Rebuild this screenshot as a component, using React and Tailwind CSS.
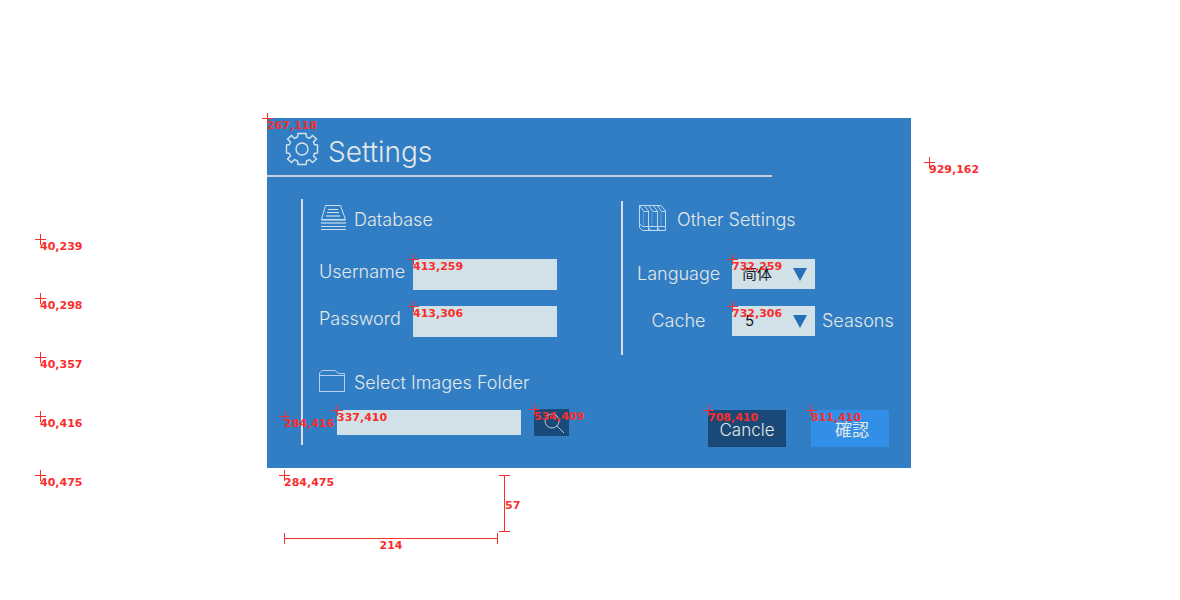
import React from "react";

const marks = [
  [267, 118], [929, 162], [40, 239], [40, 298], [40, 357], [40, 416], [40, 475],
  [284, 416], [284, 475], [413, 259], [413, 306], [732, 259], [732, 306],
  [337, 410], [534, 409], [708, 410], [811, 410],
];

function Mark({ x, y }) {
  return (
    <div className="absolute" style={{ left: x, top: y }}>
      <svg className="absolute -top-[5px] -left-[5px]" width="11" height="11" shapeRendering="crispEdges" aria-hidden="true">
        <path d="M0 5.5H11M5.5 0V11" stroke="#fa2d2d" />
      </svg>
      <span className="block leading-4 whitespace-nowrap">{x},{y}</span>
    </div>
  );
}

function Measurements() {
  return (
    <div className="pointer-events-none absolute top-0 left-0 font-['DejaVu_Sans',sans-serif] text-[11px] font-bold text-[#fa2d2d]">
      {marks.map(([x, y]) => <Mark key={x + "-" + y} x={x} y={y} />)}
      <div className="absolute top-[475px] left-[499px] flex h-[57px] items-center">
        <svg width="11" height="57" shapeRendering="crispEdges" className="shrink-0" aria-hidden="true">
          <path d="M0 .5H11M0 56.5H11M5.5 0V57" stroke="#fa2d2d" fill="none" />
        </svg>
        <span className="-ml-[5px] pt-1 leading-4">57</span>
      </div>
      <div className="absolute top-[533px] left-[284px] w-[214px] text-center">
        <svg width="214" height="11" shapeRendering="crispEdges" className="block" aria-hidden="true">
          <path d="M.5 0V11M213.5 0V11M0 5.5H214" stroke="#fa2d2d" fill="none" />
        </svg>
        <span className="-mt-[6px] block leading-4">214</span>
      </div>
    </div>
  );
}

function GearIcon() {
  return (
    <svg width="34" height="34" viewBox="-17 -17 34 34" fill="none" stroke="#d5e3ea" strokeWidth="1.4" className="shrink-0" aria-hidden="true">
      <path d="M-4 -15.500H4L4.500 -12L7.500 -10.500L10.500 -13.500L14.500 -10L11.500 -7L12.500 -4.500L15.500 -4V4L12.500 4.500L11.500 7L14.500 10L10.500 13.500L7.500 10.500L4.500 12L4 15.500H-4L-4.500 12L-7.500 10.500L-10.500 13.500L-14.500 10L-11.500 7L-12.500 4.500L-15.500 4V-4L-12.500 -4.500L-11.500 -7L-14.500 -10L-10.500 -13.500L-7.500 -10.500L-4.500 -12Z" />
      <circle r="6" />
    </svg>
  );
}

function DatabaseIcon() {
  return (
    <svg width="27" height="27" viewBox="0 0 27 27" fill="none" stroke="#cfdff0" className="shrink-0" aria-hidden="true">
      <path d="M6.500 .5H21.500L26.500 14.500H2.500Z" />
      <path d="M9 4.500H19M8 7.500H20" />
      <path d="M7 11H21M2 18H27" strokeWidth="2" opacity=".6" />
      <path d="M2 15.500H27" opacity=".5" />
      <path d="M2 21.500H27M2 24.500H27" />
    </svg>
  );
}

function BooksIcon() {
  return (
    <svg width="27" height="27" viewBox="0 0 27 27" fill="none" stroke="#bed8ee" className="shrink-0" aria-hidden="true">
      <path d="M.5 .5H22L26.500 6V25.500H3.500L.5 22.500Z" />
      <path d="M.5 .5L5 6.500H9.500M9.500 25.500V6L5 .5M9.500 .5L14 6.500H18.500M18.500 25.500V6L14 .5M18.500 .5L22.500 6.500H26.500" />
      <path d="M.5 19L3.500 21.500H26.500M9.500 22.500L12 25.500M18.500 22.500L21 25.500" />
      <path d="M4.500 7V21M13 7V21M22 7V21" opacity=".35" />
    </svg>
  );
}

function FolderIcon() {
  return (
    <svg width="27" height="24" viewBox="0 0 27 24" fill="none" stroke="#b9cff0" className="shrink-0" aria-hidden="true">
      <path d="M.5 21.500V3L3 .5H16L19.500 3.500H25.500V21.500ZM.5 5.500H25.500" />
    </svg>
  );
}

function Choice({ id, options, className }) {
  return (
    <div className="relative w-[83px]">
      <select id={id} className={"block h-[30px] w-full appearance-none bg-[#d0e2e8] pr-6 leading-5 font-normal text-[#101728] " + className}>
        {options.map((o) => <option key={o}>{o}</option>)}
      </select>
      <svg className="pointer-events-none absolute top-[9px] right-2" width="14" height="13" aria-hidden="true">
        <path d="M0 0H14L7 13Z" fill="#2370b8" />
      </svg>
    </div>
  );
}

export default function App() {
  return (
    <div className="relative min-h-screen bg-white pt-[118px] pr-0.5 font-['Inter','Noto_Sans_CJK_SC',sans-serif] text-[18px] leading-[26px] font-light text-[#e4e8e6]">
      <main className="mx-auto w-full max-w-[644px] bg-[#317ec5]">
        <header className="flex h-[57px] items-center gap-[9px] pt-1 pl-[18px]">
          <GearIcon />
          <h1 className="pt-1.5 text-[28px] leading-8">Settings</h1>
        </header>
        <div className="mr-[139px] h-0.5 bg-[#ccd0d6]" />
        <form className="grid grid-cols-[320px_1fr] pt-[22px] pb-[21px] pl-[34px]" onSubmit={(e) => e.preventDefault()}>
          <section className="mb-0.5 border-l-2 border-[#dadcf0] pt-[6px] pb-[9px] pl-4">
            <div className="flex h-[27px] items-center gap-2">
              <DatabaseIcon />
              <h2 className="pt-0.5">Database</h2>
            </div>
            <div className="mt-[27px] flex">
              <label htmlFor="username" className="w-[94px]">Username</label>
              <input id="username" className="h-[31px] w-[144px] bg-[#d0e2e8] px-2 text-[#101728]" />
            </div>
            <div className="mt-4 flex">
              <label htmlFor="password" className="w-[94px]">Password</label>
              <input id="password" type="password" className="h-[31px] w-[144px] bg-[#d0e2e8] px-2 text-[#101728]" />
            </div>
            <div className="mt-[33px] flex h-6 items-center gap-2">
              <FolderIcon />
              <h2 className="pt-0.5"><label htmlFor="folder">Select Images Folder</label></h2>
            </div>
            <div className="mt-[15px] flex items-center gap-[13px] pl-[18px]">
              <input id="folder" className="h-[25px] w-[184px] bg-[#d0e2e8] px-2 text-[#101728]" />
              <button type="button" aria-label="Browse" className="flex h-[27px] w-[35px] items-center justify-center bg-[#1a4a7a] pt-0.5 pl-1.5">
                <svg width="21" height="21" viewBox="0 0 21 21" fill="none" stroke="#b8cbd6" aria-hidden="true">
                  <circle cx="8" cy="8" r="7" />
                  <path d="M13 13L20 20" />
                </svg>
              </button>
            </div>
          </section>
          <div className="flex flex-col justify-between pt-0.5">
            <section className="border-l-2 border-[#dadcf0] pt-1 pb-[19px] pl-[14px]">
              <div className="flex h-[27px] items-center gap-[11px] pl-0.5">
                <BooksIcon />
                <h2 className="pt-0.5">Other Settings</h2>
              </div>
              <div className="mt-[27px] flex items-center">
                <label htmlFor="language" className="mr-3 w-[83px] text-center">Language</label>
                <Choice id="language" options={["简体", "繁體"]} className="pl-[10px] text-[15px]" />
              </div>
              <div className="mt-[17px] flex items-center">
                <label htmlFor="cache" className="mr-3 w-[83px] text-center">Cache</label>
                <Choice id="cache" options={["5", "10"]} className="pl-[13px] text-[15px]" />
                <span className="ml-[7px]">Seasons</span>
              </div>
            </section>
            <div className="flex justify-end gap-[25px] pr-[22px] text-[17px]">
              <button type="button" className="h-[37px] w-[78px] bg-[#1a4877] pt-0.5">Cancle</button>
              <button type="submit" className="h-[37px] w-[78px] bg-[#318fe8] pl-1 font-['Noto_Sans_CJK_JP',sans-serif] font-normal">確認</button>
            </div>
          </div>
        </form>
      </main>
      <Measurements />
    </div>
  );
}
